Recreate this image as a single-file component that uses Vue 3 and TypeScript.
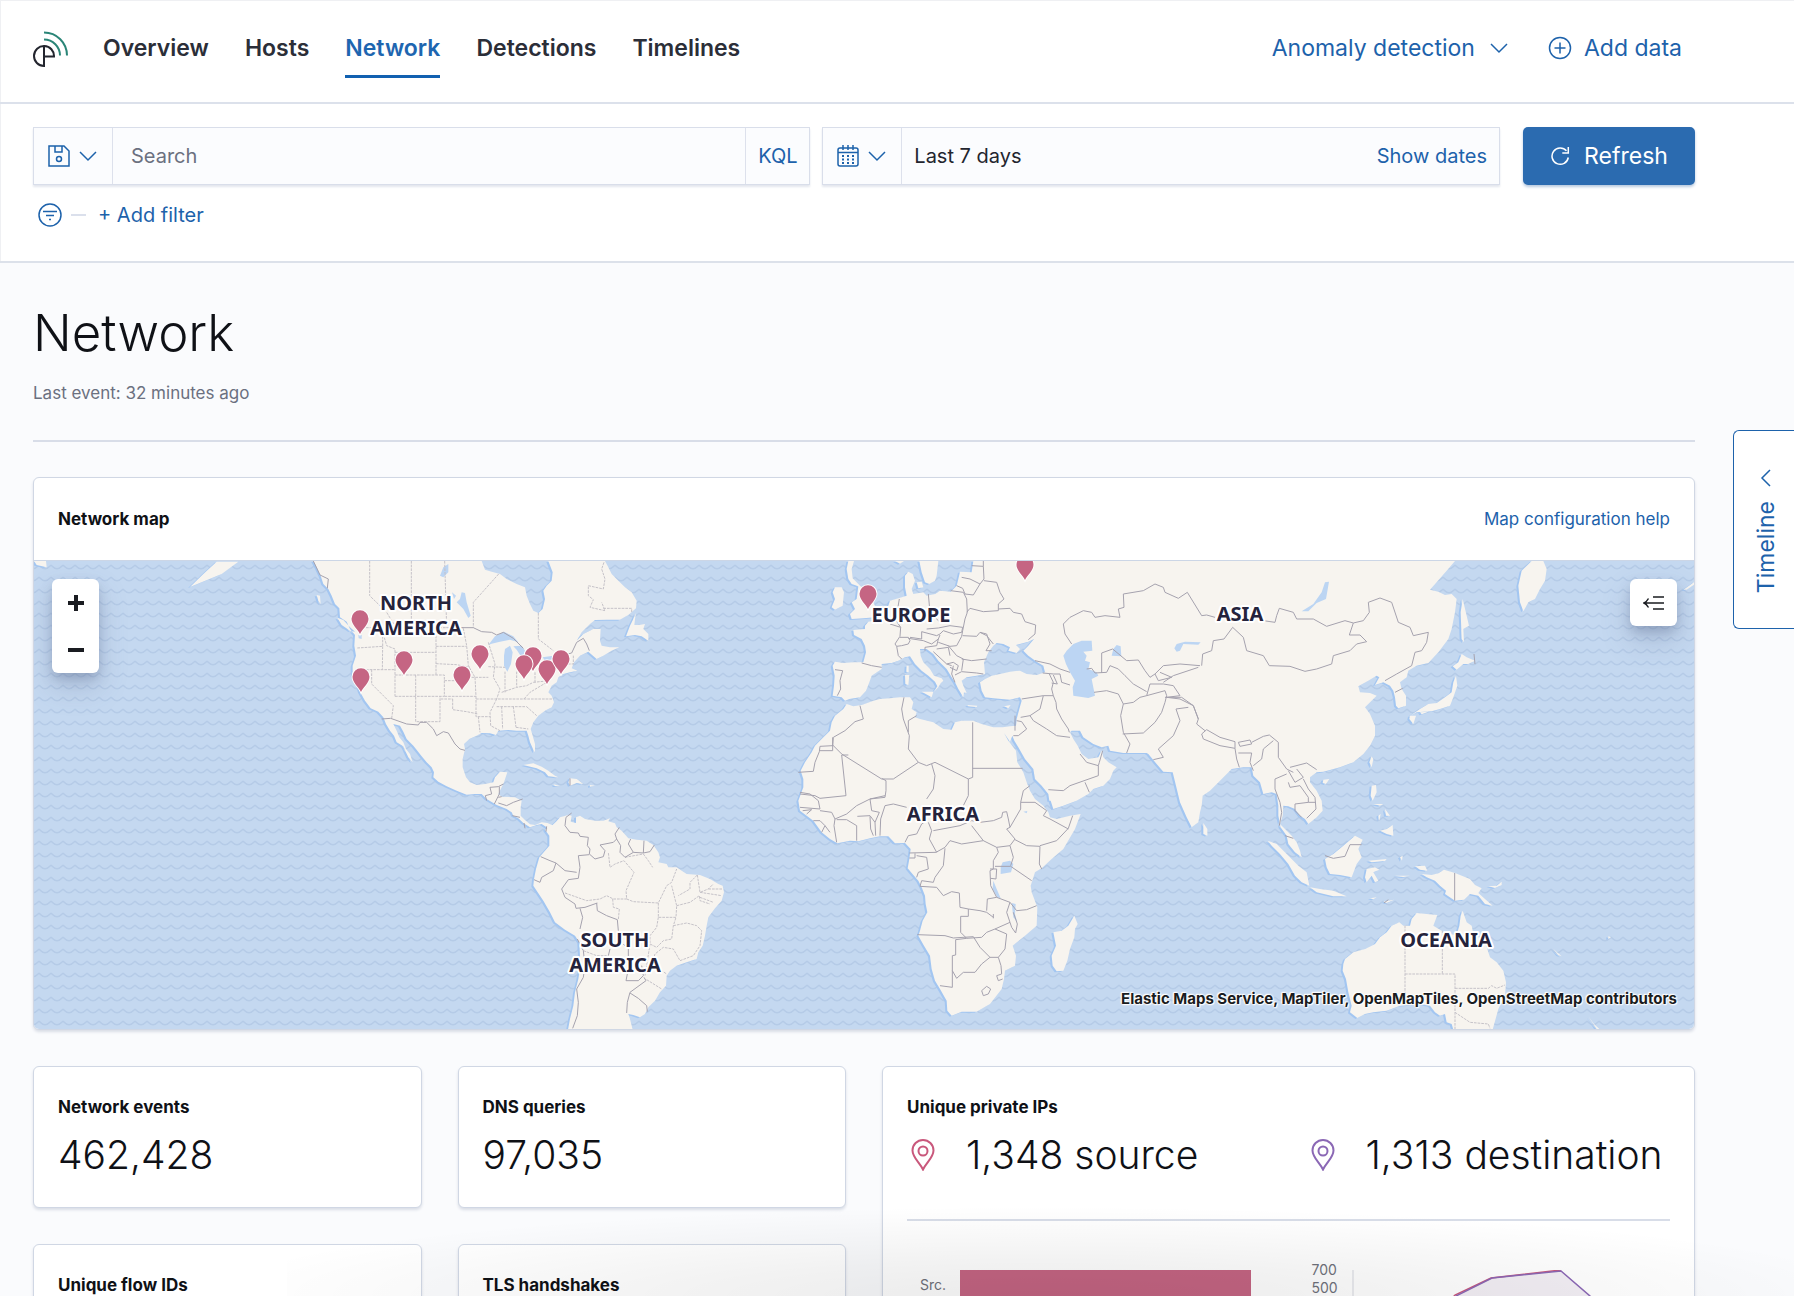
<script setup lang="ts">
import { ref } from 'vue'

interface Region {
  origin: string
  land?: string
  water?: string
  borders?: string
  states?: string
}

const tabs = ['Overview', 'Hosts', 'Network', 'Detections', 'Timelines']
const activeTab = ref('Network')
const query = ref('')

const at = (x: number, y: number) => `translate(${x} ${y}) scale(0.33333)`

const regions: Region[] = [
  {
    origin: at(300, 550),
    land: 'M40 36L50 55 62 80 70 105 85 120 95 140 105 165 118 178 120 205 140 218 150 240 165 258 163 290 168 320 158 350 158 380 172 400 180 428 195 455 212 478 235 488 250 505 258 525 270 545 282 560 290 580 310 592 318 610 325 625 338 640 330 615 318 600 310 580 298 565 290 545 280 525 300 530 310 548 320 570 340 590 352 605 365 622 380 640 395 655 402 670 400 685 415 698 440 712 470 725 500 737 525 735 545 735 560 750 590 768 620 780 635 790 640 800 655 808 670 822 690 835 710 828 725 825 740 835 745 845 765 832 742 822 725 820 705 828 690 826 675 813 662 800 662 775 665 755 645 745 605 743 595 735 605 715 612 700 622 670 600 668 585 685 580 700 555 705 530 708 510 700 498 685 488 655 488 630 495 600 492 585 508 570 530 560 545 552 570 553 588 558 595 545 625 543 650 545 680 545 685 560 690 580 700 602 705 610 705 585 698 560 692 540 700 520 715 500 735 485 755 475 762 460 755 440 745 430 755 410 770 400 775 385 790 375 810 370 832 365 815 358 822 340 840 320 865 308 890 330 910 320 935 305 958 295 930 295 905 290 900 275 902 240 880 240 850 255 830 275 845 250 870 225 885 213 920 212 960 212 985 198 1008 178 1010 155 995 130 975 115 955 95 935 75 925 55 915 36 745 36 758 70 755 95 740 110 730 125 735 150 728 180 715 192 700 185 690 165 680 140 675 115 650 105 620 90 600 75 575 68 555 62 545 36ZM1008 192L1000 210 990 230 978 262 1005 258 1025 262 1045 275 1045 255 1030 240 1035 225 1018 228 1003 228 1005 210ZM670 648L700 643 725 653 745 665 765 680 775 685 745 682 735 670 710 658 685 652ZM810 688L830 690 850 705 830 702 810 710 805 700ZM870 708L885 710 870 713ZM760 706L780 710 765 711ZM112 206L130 213 150 235 165 248 150 245 125 228ZM50 138L60 140 62 165 55 155ZM-330 114L-290 75 -250 38 -185 38 -235 75ZM-798 36L-762 36 -760 55 -790 48Z',
    water: 'M565 288L585 262 612 248 640 262 655 280 630 272 600 278 575 284ZM615 300L630 290 638 310 633 345 622 368 612 350 612 320ZM640 292L665 290 685 320 668 330 650 302ZM728 325L760 320 770 328 735 336ZM485 130L495 132 500 160 512 200 505 207 490 180 470 160 480 150ZM456 130L468 140 462 150ZM430 55L445 45 445 70 430 85 420 80ZM175 258L185 258 185 270 176 268Z',
    borders: 'M40 36L60 78 85 90 82 118M480 236L520 236 545 248 575 250 590 258 610 250 640 268 670 298M790 318L815 312 830 280 850 268 860 285 868 305M245 510L272 508 320 525 355 528 360 520 380 520 400 540 410 560 430 548 445 552 465 585 480 600 495 604M560 755L556 740 575 735 570 715 595 713 610 705M598 713V735L583 765M595 762L620 770 640 760 668 750M595 745L605 743M637 800L660 805M672 822L675 838M740 832L738 848M810 688V710',
    states: 'M209 36V140L260 190 275 215 290 237M334 36V236M434 36L440 236M596 75L520 160V236M715 192V270L760 305M912 40L905 60 915 90 910 120 865 110 865 140 880 152 870 175 915 185 905 160M910 178H995V190M165 236H490M172 297L248 292V238M248 292L247 362M165 362H285M215 362V405L280 470 275 508M285 310H408M247 245L260 290 285 300V442M285 378H433V442H285M347 378V518H420V442M408 238V378M408 292H500M408 344L470 347 510 355M490 238L500 290 505 350 525 385 528 442H433M433 395H490M515 385H565M458 450V482L500 488 535 495M422 450H458M528 442V503H570M535 503L540 550M528 450H760M590 450L570 490 572 530 600 545M605 473L608 540M640 473L648 535M590 473H680M565 280L585 345 580 385 600 420 590 450M615 368V430M650 368V415M605 430L650 415 680 410 700 400M680 473L710 500M700 400L750 395M648 535L685 540M672 450L690 430 740 400M565 353L615 355M705 370V400M820 320V345H790'
  },
  {
    origin: at(500, 790),
    land: 'M135 122L155 110 168 98 180 85 205 78 215 80 212 98 228 102 228 85 240 80 255 90 285 95 310 95 330 88 325 97 345 103 350 115 365 125 385 148 410 152 440 155 460 168 475 190 480 205 475 220 500 225 505 235 530 235 545 245 560 255 600 258 630 270 655 285 668 290 672 310 665 335 645 358 625 385 620 410 615 440 608 470 595 490 590 510 560 520 530 530 510 545 500 560 498 590 480 610 465 635 445 655 435 675 420 685 400 678 385 675 390 690 398 722 204 722 210 690 220 650 225 610 235 570 240 540 240 500 238 460 225 440 195 422 165 400 150 370 130 335 110 305 100 290 102 270 108 240 118 205 135 185 148 170 148 140Z',
    borders: 'M215 72L198 85 195 110 210 130 235 132 240 142 265 145 262 170 270 180 268 195 285 210 310 203 315 185 300 168 340 160 350 150 345 135 358 115M268 197L235 200 240 235 235 268 205 272 185 300 195 325 225 345 228 358 255 355 292 342M122 203L150 215 168 222 195 245 230 250M168 222L160 245 125 265 120 280 102 272M350 150L362 170 360 190 375 205 400 190 385 165 392 150M400 190L430 192 432 155M430 192L450 188 463 168M290 342L292 365 320 380 352 392 355 425M240 358L248 385 240 420M232 450L250 485 255 530 250 565 230 600 235 640 232 680 218 718M330 480L325 500M370 465L385 480V520M425 530L430 560 415 575 378 575 382 555M432 565L438 575 390 610 382 640 380 672M390 612L415 628 440 650 442 668',
    states: 'M195 312L260 335 300 330 320 320 340 330 380 330 378 305 402 250 372 215 345 225 330 235 325 190M380 330L400 338 475 342 500 290 515 280 530 240M375 205L430 195 445 215 458 235M338 330L340 355 358 360 355 392M475 342V385H528L530 350 515 290M475 385L470 415 450 440V465L470 475 490 455 515 450 520 410 528 385M520 410L560 402 590 410 605 425 600 470 580 500 540 515 520 480 490 475 465 495 455 525 500 555M530 350L570 340 598 320 600 335 630 345M592 258L570 280V300L535 320M592 258L600 310 625 300 640 285M600 310L665 320M625 300H668M600 325L640 340M440 572L485 600M450 465L440 530 435 560M250 485L290 500 320 500'
  },
  {
    origin: at(780, 550),
    land: 'M580 36L575 70 540 68 535 90 530 110 512 128 480 125 465 135 440 140 430 130 400 135 395 120 405 95 398 75 385 68 375 80 375 115 380 140 355 148 330 155 325 170 305 185 295 205 285 215 265 218 255 230 255 240 220 243 222 258 245 270 255 290 258 310 250 340 220 340 190 342 165 338 158 350 164 380 162 410 158 440 185 445 195 455 208 450 240 445 258 425 268 400 275 380 305 360 305 345 335 342 355 335 375 325 390 322 405 345 425 365 445 380 465 398 472 412 462 428 475 415 482 403 490 395 485 388 462 380 450 360 430 340 422 320 420 300 440 300 460 315 475 335 500 360 515 385 525 400 535 420 550 445 552 430 560 432 550 410 545 395 560 385 590 380 615 375 612 340 625 310 640 290 650 282 670 285 690 295 685 305 710 312 720 300 708 288 745 278 762 270 745 290 730 305 745 320 770 338 790 350 795 370 770 378 740 375 720 365 690 368 660 375 635 380 615 390 600 400 605 425 615 445 640 448 665 450 690 452 720 445 725 455 718 480 710 510 708 530 690 532 668 535 640 535 605 525 580 515 545 515 525 520 515 542 490 540 460 520 420 510 405 505 410 490 395 480 400 460 390 445 360 445 330 448 300 450 280 455 245 468 220 472 200 465 190 480 165 500 155 520 150 545 125 570 105 590 95 610 75 640 62 665 70 690 70 715 55 755 60 785 100 815 125 850 150 870 172 883 210 875 235 877 270 868 300 862 325 862 345 883 375 882 392 900 388 930 383 958 400 978 415 995 425 1015 435 1040 437 1065 442 1090 428 1115 420 1145 415 1160 432 1190 450 1220 455 1260 465 1295 480 1320 500 1355 502 1385 515 1400 545 1388 590 1388 630 1365 665 1320 672 1290 675 1265 705 1250 708 1220 698 1190 735 1160 770 1130 772 1075 755 1030 752 1010 765 970 785 958 815 930 850 900 885 840 902 795 870 800 830 810 810 805 805 790 790 770 765 750 750 725 740 700 730 670 712 640 708 605 685 575 672 552 690 578 697 560 703 575 715 595 735 630 760 660 765 690 785 710 805 735 808 755 812 755 820 780 850 770 890 755 925 735 940 720 970 710 990 690 1000 665 1010 655 985 640 970 625 965 605 955 625 925 630 905 615 893 590 880 570 870 550 875 545 900 545 910 565 940 585 965 595 985 590 990 605 1030 612 1100 612 1265 612 1265 36ZM205 36L200 60 205 90 215 105 235 112 232 135 230 150 215 160 225 180 210 195 215 210 250 208 285 205 292 185 275 150 262 130 240 110 218 88 215 60 222 36ZM165 115L185 115 192 130 188 170 165 182 155 175 165 150 158 130ZM418 36H475L470 80 465 95 448 105 435 100 425 70ZM345 36H372L360 44ZM410 100L425 98 430 115 415 118ZM375 378L388 378 385 408 376 405ZM380 350L386 350 386 370 379 368ZM425 428L460 428 455 445ZM562 468L592 470 590 474 565 472ZM672 472L692 468 685 478Z',
    water: 'M880 285L905 275 935 275 937 305 910 308 920 320 915 335 930 340 925 360 950 370 955 380 935 390 945 440 925 447 880 440 878 415 885 395 870 370 858 345 850 320 860 305ZM995 320L1000 300 1010 288 1022 292 1024 322ZM1183 298L1190 285 1215 278 1262 280 1255 287 1210 285 1200 305 1190 308Z',
    borders: 'M575 50L610 52V36M610 52L612 90 600 105 570 90 545 85M612 95L650 100 660 130 672 150 655 165V185L610 188 570 178 560 190M512 125L550 130 560 150 562 190 555 210 548 245M530 110L548 118 555 135 580 138 600 105M655 180L690 178 700 190 725 195 735 218 767 228 765 255 745 272M445 135L450 190 475 215M358 150L352 185 345 210 362 235 360 262M330 225L362 235M440 240L475 237 510 230 548 235 545 250 520 255 490 245 480 255 470 260 425 248V270L390 265M360 262L345 285 350 292 365 290 385 285 390 275 385 265 360 265M385 268L430 275 455 285 475 270 480 258M350 292L355 320 365 330M245 342L275 350 305 355M165 362L188 365 180 395 182 420 172 440M475 270L470 290 435 295V305M475 280L510 292 530 290 545 262 548 245M470 300L505 295 510 320M460 308L500 345 515 350M505 290L530 320 550 330 545 365M545 330L575 335 620 330M548 260L590 262 600 250 620 260 640 285M600 250L620 255 630 285 618 305 635 305M520 350L515 375 525 400M525 378L545 368 590 372 610 375M500 345L520 340 535 350 530 365 510 355M765 335L810 345 840 360 870 370M788 372L820 375 840 375 845 400 870 408M808 375L820 400 815 420 820 440M820 378L832 405 815 402M725 450L790 440 820 440 828 460 830 480 845 510 865 540 868 550M790 440L780 480 750 500 760 515 800 540 830 560 870 565M722 505L750 500M710 515L725 518 740 540 715 560 700 560M705 500V545M875 285L855 255 850 225 870 205 910 185 935 190 945 205 975 200 1020 205 1015 180 1032 175 1030 135 1090 125 1125 105 1150 115 1155 130 1195 148 1222 130 1265 200M965 372V312L998 300 1040 335 1075 333 1095 365 1110 385 1125 375 1150 350 1200 345 1260 350M920 360L935 358 945 372 980 370 990 350 1015 360 1035 380 1060 405 1100 428M942 430L980 425 1015 435 1030 465 1060 460 1080 445 1100 440 1155 425 1160 440 1155 460 1145 490 1125 520 1090 552 1028 555M1030 465L1022 500 1030 550 1050 585 1040 612M1100 440L1110 405 1150 405 1180 410 1200 440 1160 445M1125 375L1135 395 1175 385 1140 370M1150 400L1180 380 1255 355M1120 632L1150 625 1135 600 1180 560 1200 515 1188 480 1225 475M1160 445L1200 450 1240 470 1255 510M900 615L920 640 955 650 958 640 968 605M955 650V680L870 710 850 725 805 722M915 700L928 730M240 470L250 510 225 518 195 545 160 565 158 590 120 592 118 608 105 640 100 667 55 670M158 588L185 615 305 690 340 690 415 640 385 600 388 560 370 510 365 480 372 445M118 605H158V565M205 618H185L198 740 120 748 105 740 60 735M410 500L385 515V550M578 520V685L565 690 465 640 440 650 415 640M455 645L465 680 460 720 440 750M578 658H728M305 688L318 695 318 725 315 745 270 750M565 690V740L545 780M750 710L730 725 722 760'
  },
  {
    origin: at(780, 790),
    land: 'M883 380L893 405 885 420 883 445 870 480 862 515 850 545 830 547 818 530 815 500 828 470 820 430 845 425 865 410Z',
    water: 'M662 235L668 220 690 215 700 225 693 250 662 255ZM640 275L650 300 662 328 652 325 638 300ZM695 342L707 345 705 375 712 400 700 385ZM730 68L742 66 740 73Z',
    borders: 'M315 20L270 30 230 50 200 75 165 90M60 10L90 15 115 35 120 60 60 55M120 65L155 70 165 90 162 110 170 160M100 95L120 95 135 110 125 130M135 110L150 130M68 65L95 62 80 75M170 92L200 92 230 110V155M232 82L270 80 285 100 298 70 275 65 270 30M270 82L272 120 280 140M285 100L287 140M300 140L302 90 315 50 340 45 380 55M375 160L385 140 410 135 425 105 440 95M445 100L455 125 448 150 470 190M460 125L540 110 575 95 600 100 640 95 665 85 668 70 680 68 685 90 690 115 680 120 705 150 690 170 650 175 610 155 575 110M388 192L468 190 495 175 510 155 545 165 610 155M388 207H405V193M410 200L440 205 445 240 415 250 410 265M495 178L490 230 465 265 460 280 425 275 420 292 470 295 490 320 515 308 538 312 540 355 565 360 600 365 620 370 640 385M650 175L655 190 640 215 640 240 630 245 632 290 650 325 690 340M645 232H692L755 275M690 170L700 205 692 230M705 152L740 170 780 172 778 225 785 240M780 170L830 155 865 118 878 80M722 40L765 40 800 65 790 80 810 90 865 120M722 40V60L690 115M630 240L650 240 648 270 632 268M690 340L710 365 740 362 770 350M650 325L622 330 620 365M640 375V388M565 360V382H542V430L560 448 605 445 620 430 645 420 690 400 680 370 690 340M690 400L695 415 707 432 712 405 700 370M412 437L495 440 520 447 580 443 600 475 630 505 655 505 675 480 680 435 645 420M560 448L527 452V498L517 500V595L480 590M517 545L530 568 550 550 585 550 605 525 630 505M655 505L663 530 665 555 650 560 655 575 668 570M605 605L620 592 632 600 625 615 610 620Z'
  },
  {
    origin: at(1050, 550),
    land: 'M290 36H1215L1190 65 1140 122 1165 128 1185 138 1205 135 1220 150 1215 190 1205 240 1195 270 1165 310 1135 342 1100 350 1075 365 1070 385 1050 400 1055 420 1068 440 1068 470 1045 478 1038 470 1035 445 1030 425 1020 410 1000 400 975 408 988 385 980 380 955 395 925 412 930 430 960 432 980 440 945 475 960 495 975 530 975 560 960 590 940 615 910 640 870 655 840 663 820 668 800 670 780 685 780 700 800 725 815 755 818 785 800 805 775 825 765 810 750 800 735 780 715 772 700 770 698 800 690 825 705 840 725 860 740 880 750 905 755 925 735 910 715 885 710 860 692 835 685 800 685 770 680 735 665 730 640 735 630 700 610 680 605 655 580 655 545 660 510 695 480 725 458 740 455 770 450 790 445 820 425 835 410 805 390 760 378 710 368 670 340 668 320 645 295 615 290 612ZM1235 315L1250 325 1275 335 1255 345 1240 345 1220 362 1208 352 1225 340ZM1218 380L1222 410 1210 445 1200 470 1170 480 1145 487 1100 490 1080 500 1110 480 1135 465 1160 462 1185 445 1205 430 1210 400ZM1080 500L1098 500 1090 525 1078 510ZM1110 490L1135 488 1115 496ZM1238 150L1250 200 1257 230 1240 240 1242 280 1235 270 1232 190ZM965 622L970 630 965 655 958 640ZM820 692L838 690 828 705 818 702ZM460 822L472 840 472 860 460 855ZM653 875L680 885 710 915 745 950 770 970 778 1010 755 1000 735 980 715 945 690 915 665 890ZM825 930L850 915 880 890 915 860 938 872 925 900 935 925 920 945 905 985 870 978 840 975 830 955ZM780 1015L810 1020 850 1025 890 1042 850 1042 800 1030ZM965 710L978 708 980 730 968 755 962 740ZM970 765L1000 765 990 770ZM990 845L1010 840 1028 828 1030 860 1010 855ZM985 800L992 795 988 815ZM1005 780L1020 800 1008 800ZM955 935L1010 930 1005 936 965 940ZM950 960L975 955 988 962 970 970 985 995 975 1000 965 980 950 1000 945 985ZM1050 925L1058 920 1056 935Z',
    water: 'M755 187L790 165 815 130 825 100 837 98 828 150 800 162 775 187Z',
    borders: 'M455 200L470 198 495 205M640 215L675 220 680 200 688 178 730 190 740 210 790 210 830 232 885 215 910 222 940 215 958 190 955 160 990 147 1025 160 1045 220 1080 235 1090 260 1135 250 1130 280 1115 305 1095 310 1085 350 1040 375 1005 395M910 222L898 258 930 258 950 278 920 285 900 305 850 320 845 345 800 360 765 367 720 352 658 350 640 320 590 305 580 265 548 235 522 270 490 275 485 305 458 315 455 350M345 445L395 445 430 470 445 510 440 525 465 545M455 555L470 542 510 565 555 578V598L510 590 460 570ZM565 580L600 573 605 585 570 592ZM605 580L640 562 658 558 685 580 685 625 710 660 730 670M555 598L560 630 568 655M565 612H605L600 640 610 665M610 650L635 630 640 600 670 575M720 655L770 642 800 662M715 665L735 700 760 685 740 660M760 690L775 720 795 745 798 780 770 808M710 675L675 690 675 720 690 760 695 790 688 830M715 700L720 715 750 710 775 745V760L735 765V785L755 805M775 760H798M705 860L730 868M825 920L850 928 885 922 900 887H935M1035 430L1058 418M1272 315L1275 345'
  },
  {
    origin: at(1240, 780),
    land: 'M525 262L555 260 562 275 540 272ZM545 285L575 288 595 283 612 272 645 282 690 300 705 318 725 328 715 342 735 360 758 380 735 375 715 350 690 345 672 362 645 365 615 345 618 335 600 320 585 305 560 295ZM745 322L770 320 785 308 785 318 765 327ZM430 368L462 362 440 372ZM465 290L510 290 490 294ZM390 358L410 355 400 361ZM940 510L965 532 955 528ZM1105 472L1113 475 1105 480ZM1045 712L1062 735 1078 750 1070 750ZM315 540L340 520 375 510 405 495 420 475 440 460 455 440 478 430 490 440 510 440 515 420 530 402 560 405 592 408 580 440 605 455 625 465 650 468 658 440 662 410 668 395 680 430 695 440 700 465 725 480 740 505 750 535 770 550 790 575 798 610 795 650 775 690 758 752 640 752 635 735 620 730 615 705 600 710 585 700 570 680 540 675 480 680 440 695 400 700 375 705 352 717 330 700 335 680 325 640 318 600 308 575 310 555Z',
    borders: 'M644 282V365M432 372L445 362',
    states: 'M495 440V680M607 455V585M495 585H645V750M645 628H745L755 620 770 628 795 618M645 700L690 730 745 735 750 748'
  },
  {
    origin: at(1400, 400),
    land: 'M395 486L430 486 440 510 435 545 420 570 405 600 385 610 370 637 360 610 355 560 365 515ZM850 572L884 548 884 556 860 572Z'
  }
]

const labels = [
  { lines: ['NORTH', 'AMERICA'], x: 416, y: 611 },
  { lines: ['EUROPE'], x: 911, y: 623 },
  { lines: ['ASIA'], x: 1240, y: 622 },
  { lines: ['AFRICA'], x: 943, y: 822 },
  { lines: ['SOUTH', 'AMERICA'], x: 615, y: 948 },
  { lines: ['OCEANIA'], x: 1446, y: 948 }
]

const pins = [
  [360, 635], [361, 693], [404, 676], [480, 670], [462, 691], [533, 672],
  [524, 680], [547, 685], [561, 675], [868, 610], [1025, 581]
]

const stats = [
  { label: 'Network events', value: '462,428' },
  { label: 'DNS queries', value: '97,035' },
  { label: 'Unique flow IDs', value: '236,871' },
  { label: 'TLS handshakes', value: '14,602' }
]

const privateIps = [
  { kind: 'source', text: '1,348 source' },
  { kind: 'destination', text: '1,313 destination' }
]
</script>

<template>
  <div class="app">
    <header class="top">
      <svg class="logo" viewBox="0 0 36 36" aria-hidden="true">
        <path d="M11 1.500A23 23 0 0 1 34 24.500M11 8.500A16 16 0 0 1 27 24.500" class="logo-wave" />
        <path d="M11 35A10 10 0 1 1 21 25.500H11ZM11 35V15" class="logo-dish" />
      </svg>
      <nav class="tabs">
        <a
          v-for="tab in tabs"
          :key="tab"
          href="#"
          :class="['tab', { active: tab === activeTab }]"
          @click.prevent="activeTab = tab"
        >{{ tab }}</a>
      </nav>
      <div class="top-actions">
        <button type="button" class="link-button">
          Anomaly detection
          <svg class="chevron" viewBox="0 0 18 18" aria-hidden="true"><path d="M1 5l8 8 8-8" /></svg>
        </button>
        <a href="#" class="link-button add-data">
          <svg class="plus" viewBox="0 0 24 24" aria-hidden="true"><circle cx="12" cy="12" r="10.500" /><path d="M12 6.500v11M6.500 12h11" /></svg>
          Add data
        </a>
      </div>
    </header>

    <section class="filters">
      <div class="query-row">
        <div class="field search-field">
          <button type="button" class="field-menu" aria-label="Saved queries">
            <svg class="icon" viewBox="0 0 22 22" aria-hidden="true"><path d="M1 1h15l5 5v15H1zM7 1v6h7V1" /><circle cx="11" cy="14" r="2.500" /></svg>
            <svg class="chevron" viewBox="0 0 18 18" aria-hidden="true"><path d="M1 5l8 8 8-8" /></svg>
          </button>
          <input v-model="query" type="text" placeholder="Search" aria-label="Search" />
          <button type="button" class="kql">KQL</button>
        </div>
        <div class="field date-field">
          <button type="button" class="field-menu" aria-label="Quick date select">
            <svg class="icon" viewBox="0 0 22 22" aria-hidden="true">
              <path d="M3 3h16q2 0 2 2v14q0 2-2 2H3q-2 0-2-2V5q0-2 2-2zM1 7.500h20M6 0v5M11 0v5M16 0v5" />
              <path class="dots" d="M5 11h12M5 14.500h12M5 18h12" />
            </svg>
            <svg class="chevron" viewBox="0 0 18 18" aria-hidden="true"><path d="M1 5l8 8 8-8" /></svg>
          </button>
          <button type="button" class="range">Last 7 days</button>
          <button type="button" class="show-dates">Show dates</button>
        </div>
        <button type="button" class="refresh">
          <svg class="refresh-icon" viewBox="0 0 20 20" aria-hidden="true"><path d="M18.300 11.500A8.200 8.200 0 1 1 16.500 4.800M18.300 1v6h-6" /></svg>
          Refresh
        </button>
      </div>
      <div class="filter-row">
        <button type="button" class="filter-options" aria-label="Filter options">
          <svg viewBox="0 0 24 24" aria-hidden="true"><circle cx="12" cy="12" r="11" /><path d="M5 8.500h14M8 12.500h8M11 16.500h2" /></svg>
        </button>
        <span class="dash"></span>
        <button type="button" class="add-filter">+ Add filter</button>
      </div>
    </section>

    <main class="content">
      <h1>Network</h1>
      <p class="last-event">Last event: 32 minutes ago</p>
      <hr />

      <section class="panel map-panel">
        <div class="map-head">
          <h2>Network map</h2>
          <a href="#">Map configuration help</a>
        </div>
        <div class="map">
          <svg class="world" viewBox="34 562 1660 468" preserveAspectRatio="xMidYMid slice" role="img" aria-label="World map of network sources">
            <defs>
              <pattern id="waves" x="3" y="562" width="12" height="12" patternUnits="userSpaceOnUse">
                <path d="M-1 4Q0 4 1.500 5.500Q6 10 10.500 5.500Q12 4 13 4" />
              </pattern>
            </defs>
            <rect class="sea" x="34" y="562" width="1660" height="468" />
            <rect x="34" y="562" width="1660" height="468" fill="url(#waves)" />
            <g class="coast" transform="translate(-2 1)">
              <path v-for="r in regions" :key="r.origin" :d="r.land" :transform="r.origin" />
            </g>
            <g class="land">
              <path v-for="r in regions" :key="r.origin" :d="r.land" :transform="r.origin" />
            </g>
            <g class="lakes">
              <path v-for="r in regions" :key="r.origin" :d="r.water" :transform="r.origin" />
            </g>
            <g class="states">
              <path v-for="r in regions" :key="r.origin" :d="r.states" :transform="r.origin" />
            </g>
            <g class="borders">
              <path v-for="r in regions" :key="r.origin" :d="r.borders" :transform="r.origin" />
            </g>
            <g class="labels">
              <text v-for="l in labels" :key="l.x" :x="l.x" :y="l.y">
                <tspan v-for="(line, i) in l.lines" :key="line" :x="l.x" :dy="i * 25">{{ line }}</tspan>
              </text>
            </g>
            <g class="pins">
              <path
                v-for="([x, y], i) in pins"
                :key="i"
                :transform="`translate(${x} ${y})`"
                d="M0 0C-2-5-8.500-9-8.500-15.300A8.500 8.500 0 0 1 8.500-15.300C8.500-9 2-5 0 0Z"
              />
            </g>
          </svg>
          <div class="zoom-control">
            <button type="button" aria-label="Zoom in"><svg viewBox="0 0 18 18"><path d="M9 1v16M1 9h16" /></svg></button>
            <button type="button" aria-label="Zoom out"><svg viewBox="0 0 18 18"><path d="M1 9h16" /></svg></button>
          </div>
          <button type="button" class="layers" aria-label="Expand layers">
            <svg viewBox="0 0 22 16" aria-hidden="true"><path d="M10 2h11M1 8h20M10 14h11M5.500 3.500Q3.500 7 1 8Q3.500 9 5.500 12.500" /></svg>
          </button>
          <p class="attribution">
            <a href="#">Elastic Maps Service</a>, <a href="#">MapTiler</a>, <a href="#">OpenMapTiles</a>, <a href="#">OpenStreetMap contributors</a>
          </p>
        </div>
      </section>

      <div class="bottom">
        <div class="stats">
          <section v-for="s in stats" :key="s.label" class="panel stat">
            <h2>{{ s.label }}</h2>
            <p class="figure">{{ s.value }}</p>
          </section>
        </div>
        <section class="panel ips">
          <h2>Unique private IPs</h2>
          <div class="pair">
            <div v-for="ip in privateIps" :key="ip.kind" class="ip">
              <svg :class="['marker', ip.kind]" viewBox="0 0 24 32" aria-hidden="true">
                <path d="M12 30.500C9 24 1.500 18.500 1.500 11.500A10.500 10.500 0 0 1 22.500 11.500C22.500 18.500 15 24 12 30.500Z" />
                <circle cx="12" cy="12" r="4.500" />
              </svg>
              <p class="figure">{{ ip.text }}</p>
            </div>
          </div>
          <hr />
          <div class="pair charts">
            <div class="bar-chart">
              <span>Src.</span>
              <div class="bar"></div>
            </div>
            <div class="area-chart">
              <div class="ticks"><span>700</span><span>500</span><span>300</span></div>
              <svg viewBox="0 0 320 120" preserveAspectRatio="xMinYMin meet" aria-hidden="true">
                <path class="axis" d="M1 0V120" />
                <path class="area" d="M20 120L104 26 140 8 209 0 238 26 300 120Z" />
                <path class="line-source" d="M20 119L103 25 139 8 209 0" />
                <path class="line-destination" d="M22 119L104 26 140 8 209 1 238 26 300 120" />
              </svg>
            </div>
          </div>
        </section>
      </div>
    </main>

    <button type="button" class="timeline">
      <svg viewBox="0 0 18 18" aria-hidden="true"><path d="M13 1L5 9l8 8" /></svg>
      <span>Timeline</span>
    </button>
    <div class="fade"></div>
  </div>
</template>

<style>
body {
  margin: 0;
}
</style>

<style scoped>
.app {
  position: relative;
  height: 100vh;
  overflow: hidden;
  background: #fafbfd;
  color: #0f1116;
  font: 17px/24px Inter, "Liberation Sans", sans-serif;
}
.app * {
  box-sizing: border-box;
}
button {
  padding: 0;
  border: 0;
  background: none;
  color: #1d62ab;
  font: inherit;
  cursor: pointer;
}
a {
  color: #1d62ab;
  text-decoration: none;
}
svg {
  display: block;
  flex: none;
  fill: none;
  stroke: currentColor;
  stroke-width: 1.5;
}
h1, h2, p {
  margin: 0;
}
hr {
  margin: 0;
  border: 0;
  border-top: 2px solid #d8dde8;
}

.top {
  display: flex;
  align-items: flex-start;
  height: 104px;
  padding: 0 112px 0 33px;
  border-bottom: 2px solid #dce1eb;
  background: #fff;
  font-size: 23px;
  line-height: 32px;
  box-shadow: inset 1px 1px 0 #eff0f3;
}
.logo {
  width: 36px;
  height: 36px;
  margin: 31px 34px 0 0;
}
.logo-wave {
  stroke: #2a8577;
  stroke-width: 2;
}
.logo-dish {
  stroke: #23252e;
  stroke-width: 2;
}
.tabs {
  display: flex;
  gap: 36px;
}
.tab {
  padding: 32px 0 11px;
  border-bottom: 3px solid transparent;
  color: #2b2e38;
  font-weight: 600;
}
.tab.active {
  border-color: #1160b0;
  color: #1e66b0;
}
.top-actions {
  display: flex;
  gap: 40px;
  margin-left: auto;
  padding-top: 32px;
}
.link-button {
  display: flex;
  align-items: center;
  gap: 15px;
}
.add-data {
  gap: 12px;
}
.chevron {
  width: 18px;
  height: 18px;
}
.plus {
  width: 24px;
  height: 24px;
}

.filters {
  height: 159px;
  padding: 23px 99px 0 33px;
  border-bottom: 2px solid #dce1ea;
  background: #fff;
  box-shadow: inset 1px 0 0 #eff0f3;
  font-size: 20px;
}
.query-row {
  display: flex;
  height: 58px;
}
.field {
  display: flex;
  border: 1px solid #d9deea;
  background: #fbfcfe;
  box-shadow: 0 2px 2px #e4e7ee;
}
.search-field {
  flex: 778;
  margin-right: 12px;
}
.date-field {
  flex: 678;
  margin-right: 23px;
}
.field-menu {
  display: flex;
  flex: none;
  align-items: center;
  gap: 9px;
  width: 79px;
  padding-left: 14px;
  border-right: 1px solid #dde1ec;
}
.icon {
  width: 22px;
  height: 22px;
}
.dots {
  stroke-width: 2;
  stroke-dasharray: 2 3;
}
.field input {
  flex: 1;
  min-width: 0;
  padding: 0 18px;
  border: 0;
  background: none;
  color: #343741;
  font: inherit;
  outline: none;
}
.field input::placeholder {
  color: #6b7080;
  opacity: 1;
}
.kql {
  flex: none;
  width: 64px;
  border-left: 1px solid #dde1ec;
}
.range {
  flex: 1;
  padding-left: 12px;
  color: #23252e;
  text-align: left;
}
.show-dates {
  padding-right: 12px;
}
.refresh {
  display: flex;
  flex: none;
  align-items: center;
  justify-content: center;
  gap: 14px;
  width: 172px;
  border-radius: 5px;
  background: #2b6bb0;
  color: #fff;
  font-size: 23px;
  box-shadow: 0 2px 3px #b7c9df;
}
.refresh-icon {
  width: 20px;
  height: 20px;
}
.filter-row {
  display: flex;
  align-items: center;
  margin-top: 14px;
  padding-left: 5px;
  height: 32px;
}
.filter-options svg {
  width: 24px;
  height: 24px;
}
.dash {
  width: 15px;
  margin: 0 12px 0 9px;
  border-top: 2px solid #dbe0ec;
}

.content {
  padding: 36px 99px 0 33px;
}
h1 {
  font-size: 51px;
  font-weight: 300;
  line-height: 68px;
}
.last-event {
  margin: 14px 0 35px;
  color: #6b7080;
}
h2 {
  font-size: 17px;
  font-weight: 700;
  line-height: 24px;
}
.panel {
  border: 1px solid #d0d7e4;
  border-radius: 6px;
  background: #fff;
  box-shadow: 0 2px 3px #d9dde6;
}
.map-panel {
  margin-top: 35px;
  overflow: hidden;
}
.map-head {
  display: flex;
  align-items: center;
  justify-content: space-between;
  height: 83px;
  padding: 0 24px;
  border-bottom: 1px solid #ccd6e6;
}
.map {
  position: relative;
}
.world {
  width: 100%;
  height: auto;
  stroke: none;
}
.sea {
  fill: #c4d8f0;
}
.world pattern path {
  stroke: #b5cbe7;
  stroke-width: 1.5;
}
.coast {
  fill: #a3c6f1;
}
.land {
  fill: #f7f4ef;
}
.lakes {
  fill: #bcd5f3;
}
.borders path,
.states path {
  stroke: #a5a2ae;
  stroke-width: 3;
  stroke-linejoin: round;
}
.states path {
  stroke: #c5c2c8;
  stroke-dasharray: 8 3;
}
.labels {
  fill: #25233c;
  stroke: #fff;
  stroke-width: 4;
  stroke-linejoin: round;
  paint-order: stroke;
  font: 700 20px "Noto Sans", sans-serif;
  text-anchor: middle;
}
.pins {
  fill: #c56583;
  stroke: #fff;
  stroke-width: 2;
  paint-order: stroke;
}
.zoom-control,
.layers {
  position: absolute;
  top: 18px;
  border-radius: 6px;
  background: #fff;
  box-shadow: 0 6px 12px -1px rgba(90, 105, 140, 0.35), 0 14px 28px rgba(90, 105, 140, 0.25);
}
.zoom-control {
  left: 18px;
  width: 47px;
}
.zoom-control button,
.layers {
  display: grid;
  place-items: center;
  width: 47px;
  height: 47px;
  color: #1a1c21;
}
.zoom-control svg {
  width: 18px;
  height: 18px;
  stroke-width: 4;
}
.layers {
  right: 17px;
}
.layers svg {
  width: 22px;
  height: 16px;
}
.attribution {
  position: absolute;
  right: 17px;
  bottom: 18px;
  color: #1a1c21;
  font-size: 15px;
  font-weight: 700;
  text-shadow: 0 0 2px #fff, 0 0 2px #fff, 0 0 3px #fff, 1px 1px 1px #fff, -1px -1px 1px #fff;
}
.attribution a {
  color: inherit;
}

.bottom {
  display: grid;
  grid-template-columns: minmax(0, 1fr) minmax(0, 1fr);
  gap: 36px;
  margin-top: 36px;
}
.stats {
  display: grid;
  grid-template-columns: 1fr 1fr;
  align-content: start;
  gap: 36px;
}
.stat {
  height: 142px;
  padding: 28px 24px;
}
.figure {
  font-size: 39px;
  font-weight: 300;
  line-height: 56px;
  white-space: nowrap;
}
.stat .figure {
  margin-top: 8px;
}
.ips {
  padding: 28px 24px;
}
.pair {
  display: grid;
  grid-template-columns: minmax(0, 1fr) minmax(0, 1fr);
  gap: 36px;
}
.ip {
  display: flex;
  align-items: center;
  gap: 31px;
  margin-top: 8px;
  padding: 0 0 36px 4px;
}
.marker {
  width: 24px;
  height: 32px;
  stroke-width: 2;
}
.marker.source {
  color: #c9587c;
}
.marker.destination {
  color: #8b68b5;
}
.charts {
  padding-top: 49px;
  color: #6f727b;
  font-size: 14px;
  line-height: 18px;
}
.bar-chart {
  display: flex;
  gap: 14px;
  padding: 0 20px 0 13px;
}
.bar-chart span {
  margin-top: 6px;
}
.bar {
  flex: 1;
  height: 60px;
  background: #c56583;
}
.area-chart {
  display: flex;
  gap: 14px;
  padding-left: 5px;
}
.area-chart svg {
  width: 320px;
  height: 120px;
}
.ticks {
  display: flex;
  flex-direction: column;
  margin-top: -9px;
}
.axis {
  stroke: #e3e5ea;
}
.area {
  fill: #f2eef4;
  stroke: none;
}
.line-source {
  stroke: #c9587c;
}
.line-destination {
  stroke: #8b68b5;
}

.timeline {
  position: absolute;
  top: 430px;
  right: 0;
  display: flex;
  flex-direction: column;
  align-items: center;
  gap: 14px;
  width: 61px;
  height: 199px;
  padding: 38px 0 0 3px;
  border: 1px solid #1d62ab;
  border-right: 0;
  border-radius: 6px 0 0 6px;
  background: #fff;
  font-size: 23px;
  line-height: 32px;
}
.timeline svg {
  width: 18px;
  height: 18px;
}
.timeline span {
  writing-mode: vertical-rl;
  transform: rotate(180deg);
}
.fade {
  position: absolute;
  right: 0;
  bottom: 0;
  left: 16%;
  height: 90px;
  background: radial-gradient(ellipse 56% 100% at 50% 100%, rgba(0, 0, 0, 0.08), rgba(0, 0, 0, 0.05) 40%, transparent);
  pointer-events: none;
}
</style>
